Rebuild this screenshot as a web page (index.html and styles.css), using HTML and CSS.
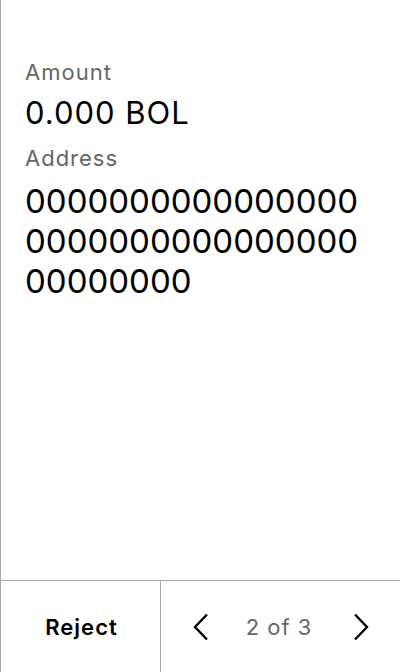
FILE: index.html
```html
<!DOCTYPE html>
<html>
<head>
<meta charset="utf-8">
<link rel="stylesheet" href="styles.css">
</head>
<body>
<div class="screen">
  <main class="content">
    <div class="label">Amount</div>
    <div class="value">0.000 BOL</div>
    <div class="label label-address">Address</div>
    <div class="address">0000000000000000000000000000000000000000</div>
  </main>
  <footer class="footer">
    <button class="reject">Reject</button>
    <div class="pager">
      <svg class="chev" width="16" height="28" viewBox="0 0 16 28"><path d="M14 1.5 L2 14 L14 26.5" fill="none" stroke="#000" stroke-width="2.4"/></svg>
      <span class="count">2 of 3</span>
      <svg class="chev" width="16" height="28" viewBox="0 0 16 28"><path d="M2 1.5 L14 14 L2 26.5" fill="none" stroke="#000" stroke-width="2.4"/></svg>
    </div>
  </footer>
</div>
</body>
</html>
```
FILE: styles.css
```css
* { box-sizing: border-box; }
html, body { margin: 0; padding: 0; background: #fff; }
body { font-family: Inter, "Noto Sans", sans-serif; color: #000; }
.screen {
  width: 400px;
  height: 672px;
  border-left: 1px solid #aaa;
  display: flex;
  flex-direction: column;
}
.content {
  flex: 1;
  padding: 56px 24px 0 24px;
}
.label {
  font-size: 22px;
  line-height: 32px;
  letter-spacing: 1px;
  color: #666;
}
.label-address {
  margin-top: 9px;
}
.value {
  margin-top: 5px;
  font-size: 31px;
  line-height: 40px;
  letter-spacing: 1px;
}
.address {
  margin-top: 7px;
  font-size: 33px;
  line-height: 40px;
  word-break: break-all;
  width: 345px;
}
.footer {
  height: 92px;
  border-top: 1px solid #aaa;
  display: flex;
}
.reject {
  width: 160px;
  border: 0;
  border-right: 1px solid #aaa;
  background: #fff;
  font-family: Inter, sans-serif;
  font-weight: 600;
  font-size: 22px;
  letter-spacing: 1px;
  color: #000;
  padding: 0 0 0 2px;
}
.pager {
  flex: 1;
  display: flex;
  align-items: center;
  justify-content: space-between;
  padding: 0 31px 0 32px;
}
.count {
  font-size: 22px;
  letter-spacing: 1px;
  color: #666;
  margin-right: 4px;
}
```
